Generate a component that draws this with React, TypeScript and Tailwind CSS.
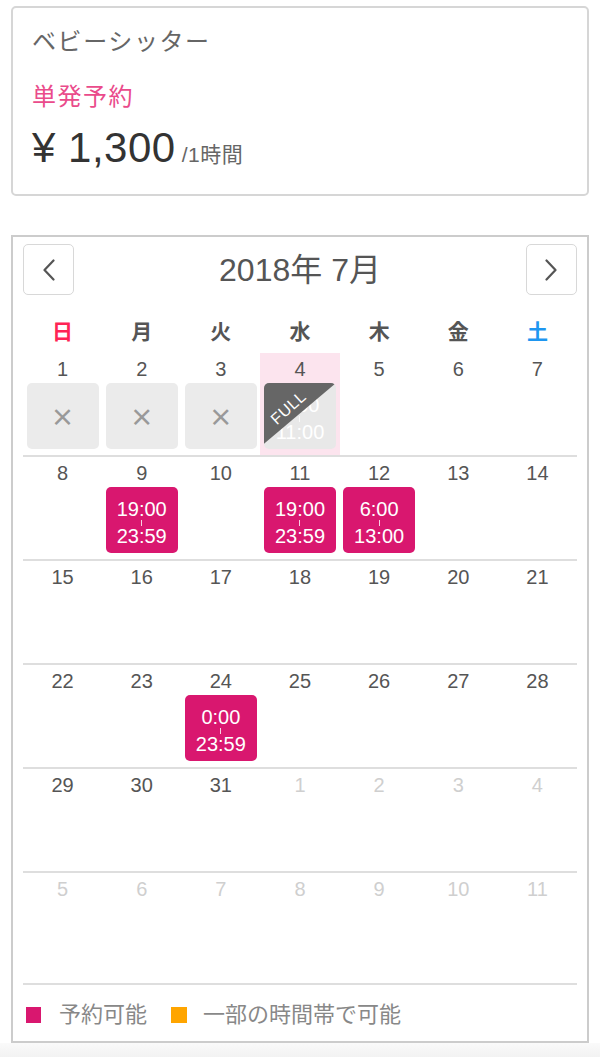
import React from "react";

type Chip =
  | { kind: "none" }
  | { kind: "closed" }
  | { kind: "open"; from: string; to: string }
  | { kind: "full"; from: string; to: string };

interface Cell {
  d: number;
  muted?: boolean;
  today?: boolean;
  chip?: Chip;
}

const weeks: Cell[][] = [
  [
    { d: 1, chip: { kind: "closed" } },
    { d: 2, chip: { kind: "closed" } },
    { d: 3, chip: { kind: "closed" } },
    { d: 4, today: true, chip: { kind: "full", from: "6:00", to: "11:00" } },
    { d: 5 },
    { d: 6 },
    { d: 7 },
  ],
  [
    { d: 8 },
    { d: 9, chip: { kind: "open", from: "19:00", to: "23:59" } },
    { d: 10 },
    { d: 11, chip: { kind: "open", from: "19:00", to: "23:59" } },
    { d: 12, chip: { kind: "open", from: "6:00", to: "13:00" } },
    { d: 13 },
    { d: 14 },
  ],
  [15, 16, 17, 18, 19, 20, 21].map((d) => ({ d })),
  [
    { d: 22 },
    { d: 23 },
    { d: 24, chip: { kind: "open", from: "0:00", to: "23:59" } },
    { d: 25 },
    { d: 26 },
    { d: 27 },
    { d: 28 },
  ],
  [
    { d: 29 },
    { d: 30 },
    { d: 31 },
    { d: 1, muted: true },
    { d: 2, muted: true },
    { d: 3, muted: true },
    { d: 4, muted: true },
  ],
  [5, 6, 7, 8, 9, 10, 11].map((d) => ({ d, muted: true })),
];

const days = [
  { label: "日", color: "text-[#ff2455]" },
  { label: "月", color: "text-[#555]" },
  { label: "火", color: "text-[#555]" },
  { label: "水", color: "text-[#555]" },
  { label: "木", color: "text-[#555]" },
  { label: "金", color: "text-[#555]" },
  { label: "土", color: "text-[#1e96f0]" },
];

function TimeRange({ from, to }: { from: string; to: string }) {
  return (
    <div className="flex flex-col items-center pt-[12px] text-[20px] leading-[20px] text-white">
      <span>{from}</span>
      <div className="flex h-[7px] items-center justify-center">
        <div className="h-[6px] w-px bg-white/80" />
      </div>
      <span>{to}</span>
    </div>
  );
}

function DayChip({ chip }: { chip: Chip }) {
  if (chip.kind === "closed") {
    return (
      <div className="mx-auto flex h-[66px] w-[72px] items-center justify-center rounded-[5px] bg-[#ebebeb] font-['Noto_Sans_CJK_JP',sans-serif] text-[24px] font-bold text-[#999]">
        ×
      </div>
    );
  }
  if (chip.kind === "open") {
    return (
      <div className="mx-auto h-[66px] w-[72px] rounded-[5px] bg-[#d9176f]">
        <TimeRange from={chip.from} to={chip.to} />
      </div>
    );
  }
  if (chip.kind === "full") {
    return (
      <div className="relative mx-auto h-[66px] w-[72px] overflow-hidden rounded-[5px] bg-[#e8e8e8]">
        <TimeRange from={chip.from} to={chip.to} />
        {/* dark corner ribbon */}
        <div className="absolute inset-0 bg-[#666] [clip-path:polygon(0_0,100%_0,0_92%)]" />
        <span className="absolute left-[4px] top-[17px] -rotate-[42deg] text-[16px] leading-none tracking-[0.5px] text-white">
          FULL
        </span>
      </div>
    );
  }
  return null;
}

function Chevron({ dir }: { dir: "left" | "right" }) {
  return (
    <svg width="12" height="22" viewBox="0 0 12 22" fill="none">
      <polyline
        points={dir === "left" ? "10.5,1.5 1.5,11 10.5,20.5" : "1.5,1.5 10.5,11 1.5,20.5"}
        stroke="#555"
        strokeWidth="2.2"
        strokeLinecap="round"
        strokeLinejoin="round"
      />
    </svg>
  );
}

export default function App() {
  return (
    <div className="w-[600px] min-h-[1059px] bg-white font-['Liberation_Sans','Noto_Sans_CJK_JP',sans-serif]">
      <div className="h-[6px]" />

      {/* plan card */}
      <div className="mx-[11px] h-[190px] rounded-[5px] border-2 border-[#d6d6d6] pl-[19px] pt-[18px]">
        <div className="text-[24px] leading-[32px] tracking-[1.6px] text-[#666]">ベビーシッター</div>
        <div className="mt-[23px] text-[24px] leading-[32px] tracking-[1.5px] text-[#ea4b8b]">単発予約</div>
        <div className="mt-[11px] flex items-baseline leading-[48px]">
          <span className="text-[42px] tracking-[0.5px] text-[#333]">¥ 1,300</span>
          <span className="ml-[6px] text-[21px] tracking-[0.5px] text-[#666]">/1時間</span>
        </div>
      </div>

      {/* calendar */}
      <div className="mx-[11px] mt-[39px] border-2 border-[#cccccc] px-[10px] pt-[7px]">
        <div className="flex h-[51px] items-center justify-between">
          <button className="flex h-[51px] w-[51px] items-center justify-center rounded-[5px] border border-[#d8d8d8] bg-white">
            <Chevron dir="left" />
          </button>
          <div className="text-[32px] text-[#555]">2018年 7月</div>
          <button className="flex h-[51px] w-[51px] items-center justify-center rounded-[5px] border border-[#d8d8d8] bg-white">
            <Chevron dir="right" />
          </button>
        </div>

        <div className="mt-[22px] grid h-[30px] grid-cols-7">
          {days.map((d) => (
            <div key={d.label} className={`text-center text-[21px] font-bold leading-[30px] ${d.color}`}>
              {d.label}
            </div>
          ))}
        </div>

        <div className="mt-[6px]">
          {weeks.map((week, wi) => (
            <div
              key={wi}
              className={
                wi < weeks.length - 1
                  ? "grid h-[104px] grid-cols-7 border-b-2 border-[#dedede]"
                  : "grid h-[110px] grid-cols-7"
              }
            >
              {week.map((cell, ci) => (
                <div key={ci} className={cell.today ? "bg-[#fce4ee]" : ""}>
                  <div
                    className={`pt-[5px] text-center text-[20px] leading-[22px] ${
                      cell.muted ? "text-[#cfcfcf]" : "text-[#555]"
                    }`}
                  >
                    {cell.d}
                  </div>
                  {cell.chip && (
                    <div className="mt-[3px]">
                      <DayChip chip={cell.chip} />
                    </div>
                  )}
                </div>
              ))}
            </div>
          ))}
        </div>

        {/* legend */}
        <div className="flex h-[58px] items-center border-t-2 border-[#dedede] pl-[3px] pt-[3px] text-[22px] text-[#888]">
          <div className="h-[16px] w-[15px] bg-[#d9176f]" />
          <span className="ml-[18px]">予約可能</span>
          <div className="ml-[24px] h-[16px] w-[16px] bg-[#ffa500]" />
          <span className="ml-[16px]">一部の時間帯で可能</span>
        </div>
      </div>

      <div className="h-[14px] bg-gradient-to-b from-[#fafafa] to-[#f2f2f2]" />
    </div>
  );
}
